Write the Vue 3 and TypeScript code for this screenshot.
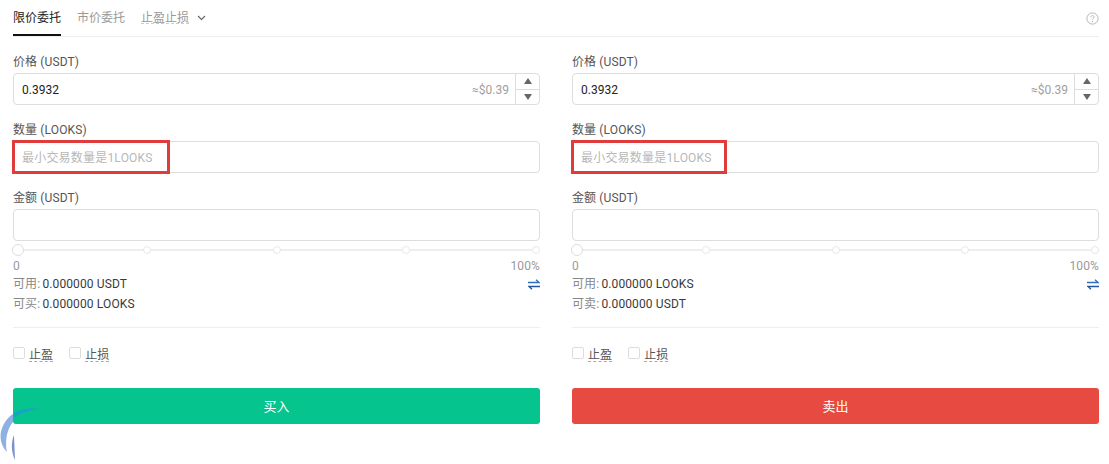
<script setup lang="ts">
interface Panel {
  amountUnit: string
  avail: string
  availUnit: string
  maxLabel: string
  maxUnit: string
  action: string
  kind: string
}
const panels: Panel[] = [
  { amountUnit: 'LOOKS', avail: '可用:', availUnit: 'USDT', maxLabel: '可买:', maxUnit: 'LOOKS', action: '买入', kind: 'buy' },
  { amountUnit: 'LOOKS', avail: '可用:', availUnit: 'LOOKS', maxLabel: '可卖:', maxUnit: 'USDT', action: '卖出', kind: 'sell' },
]
</script>

<template>
  <div class="page">
    <div class="tabs">
      <span class="tab active">限价委托</span>
      <span class="tab">市价委托</span>
      <span class="tab drop">止盈止损
        <svg width="9" height="6" viewBox="0 0 9 6"><path d="M1 1l3.5 3.5L8 1" fill="none" stroke="#666" stroke-width="1.2"/></svg>
      </span>
      <svg class="help" width="13" height="13" viewBox="0 0 13 13">
        <circle cx="6.5" cy="6.5" r="5.6" fill="none" stroke="#b5b5b5"/>
        <path d="M4.9 5.2c0-1 .7-1.6 1.6-1.6s1.6.6 1.6 1.4c0 1.2-1.6 1.3-1.6 2.6" fill="none" stroke="#b5b5b5"/>
        <circle cx="6.5" cy="9.4" r=".7" fill="#b5b5b5"/>
      </svg>
    </div>
    <div class="columns">
      <div v-for="p in panels" :key="p.kind" class="panel">
        <div class="label">价格 (USDT)</div>
        <div class="field">
          <span class="value">0.3932</span>
          <span class="approx">≈$0.39</span>
          <span class="stepper">
            <span class="step"><i class="up"></i></span>
            <span class="step"><i class="down"></i></span>
          </span>
        </div>
        <div class="label">数量 ({{ p.amountUnit }})</div>
        <div class="field">
          <span class="placeholder">最小交易数量是1LOOKS</span>
          <span class="mark" :class="p.kind"></span>
        </div>
        <div class="label">金额 (USDT)</div>
        <div class="field"></div>
        <div class="slider">
          <span class="knob"></span>
          <span class="dot d1"></span>
          <span class="dot d2"></span>
          <span class="dot d3"></span>
          <span class="dot d4"></span>
        </div>
        <div class="ends"><span>0</span><span>100%</span></div>
        <div class="info first">
          <span><em>{{ p.avail }}</em> 0.000000 {{ p.availUnit }}</span>
          <svg width="12" height="11" viewBox="0 0 12 11">
            <path d="M0 3.5h11L8 .8" fill="none" stroke="#2f6fc0" stroke-width="1.3"/>
            <path d="M12 7.5H1L4 10.2" fill="none" stroke="#2a55a5" stroke-width="1.3"/>
          </svg>
        </div>
        <div class="info second"><span><em>{{ p.maxLabel }}</em> 0.000000 {{ p.maxUnit }}</span></div>
        <div class="divider"></div>
        <div class="checks">
          <label class="check"><i></i><u>止盈</u></label>
          <label class="check"><i></i><u>止损</u></label>
        </div>
        <button class="action" :class="p.kind">{{ p.action }}</button>
      </div>
    </div>
    <svg class="logo" width="44" height="60" viewBox="0 0 44 60">
      <path d="M13 8C4 14-1 25 1 35C2 40 5 44 7 46C5 38 6 24 13 16Z" fill="#8fb0e2"/>
      <path d="M14 29C11 36 11 46 15 54Z" fill="#7d93c8"/>
      <path d="M13 8C20 3 30 1 40 3C32 4 22 6 14 12Z" fill="#1aa3c8" opacity=".9"/>
    </svg>
  </div>
</template>

<style>
html, body { margin: 0; background: #fff; }
</style>

<style scoped>
.page {
  position: relative;
  width: 1109px;
  height: 464px;
  box-sizing: border-box;
  padding: 0 10px 0 13px;
  overflow: hidden;
  font-family: Roboto, "Noto Sans CJK SC", sans-serif;
  font-size: 12px;
  letter-spacing: 0.12px;
  color: #3a3a3a;
}
.tabs {
  display: flex;
  align-items: flex-start;
  gap: 16px;
  height: 37px;
  box-sizing: border-box;
  border-bottom: 1px solid #eee;
}
.tab {
  height: 36px;
  line-height: 37px;
  color: #999;
  box-sizing: border-box;
  letter-spacing: 0;
}
.tab.active { color: #222; border-bottom: 2px solid #111; }
.tab.drop { display: flex; align-items: center; gap: 8px; height: 36px; text-decoration: underline dashed #ccc; }
.help { margin-left: auto; margin-top: 12px; }
.columns { display: flex; gap: 32px; }
.panel { flex: 1; min-width: 0; }
.label { height: 17px; line-height: 17px; margin-top: 17px; margin-bottom: 2px; color: #555; }
.field {
  position: relative;
  display: flex;
  align-items: center;
  height: 32px;
  box-sizing: border-box;
  padding-left: 8px;
  border: 1px solid #ddd;
  border-radius: 4px;
}
.value { flex: 1; color: #222; padding-top: 2px; letter-spacing: 0; }
.approx { color: #a0a0a0; margin-right: 6px; padding-top: 2px; letter-spacing: 0; }
.placeholder { color: #b8b8b8; padding-bottom: 2px; letter-spacing: 0.2px; }
.stepper {
  display: flex;
  flex-direction: column;
  width: 23px;
  height: 100%;
  border-left: 1px solid #ddd;
}
.step { flex: 1; display: flex; align-items: center; justify-content: center; }
.step:first-child { border-bottom: 1px solid #ddd; }
.up { border: 4px solid transparent; border-top: 0; border-bottom: 6px solid #666; }
.down { border: 4px solid transparent; border-bottom: 0; border-top: 6px solid #666; }
.mark {
  position: absolute;
  left: -2px;
  top: -2px;
  height: 34px;
  box-sizing: border-box;
  border: 3px solid #e03c3c;
}
.mark.buy { width: 158px; }
.mark.sell { width: 156px; }
.slider {
  position: relative;
  height: 2px;
  margin-top: 8px;
  background: #eee;
}
.knob, .dot {
  position: absolute;
  box-sizing: border-box;
  background: #fff;
  border: 1px solid #ddd;
  border-radius: 50%;
}
.knob { left: -1px; top: -5px; width: 12px; height: 12px; }
.dot { top: -3px; width: 8px; height: 8px; border-color: #e8e8e8; }
.d1 { left: 130px; }
.d2 { left: 260px; }
.d3 { left: 389px; }
.d4 { right: 0; }
.ends {
  display: flex;
  justify-content: space-between;
  height: 17px;
  line-height: 17px;
  margin-top: 7px;
  margin-bottom: -1px;
  color: #999;
}
.info {
  display: flex;
  justify-content: space-between;
  align-items: center;
  height: 20px;
  line-height: 20px;
}
.info em { font-style: normal; color: #888; margin-right: -1px; }
.divider { height: 1px; margin-top: 13px; background: #eee; }
.checks { display: flex; gap: 16px; margin-top: 16px; margin-bottom: 1px; height: 18px; align-items: center; }
.check { display: flex; align-items: center; gap: 4px; color: #555; }
.check i {
  width: 12px;
  height: 12px;
  box-sizing: border-box;
  border: 1px solid #ddd;
  border-radius: 2px;
}
.check u { text-decoration: underline dashed #aaa; text-underline-offset: 2px; }
.action {
  display: block;
  width: 100%;
  height: 36px;
  margin-top: 26px;
  padding: 0 0 1px;
  border: 0;
  border-radius: 3px;
  color: #fff;
  font: inherit;
  font-size: 13px;
}
.action.buy { background: #05c48e; }
.action.sell { background: #e64a40; }
.logo { position: absolute; left: 0; top: 406px; }
</style>
